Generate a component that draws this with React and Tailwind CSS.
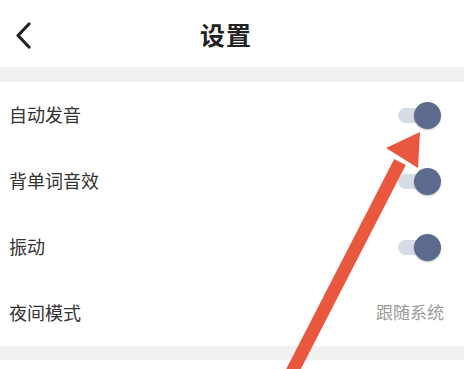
import React from "react"

const rows = [
  { label: "自动发音", toggle: true },
  { label: "背单词音效", toggle: true },
  { label: "振动", toggle: true },
  { label: "夜间模式", value: "跟随系统" },
]

function Toggle() {
  return (
    <div className="flex items-center">
      <div className="w-[30px] h-[15px] rounded-full bg-[#d6dce6]" />
      <div className="w-[27px] h-[27px] -ml-[14px] rounded-full bg-[#5c6b8d] shadow-[0_1px_2px_rgba(0,0,0,0.25)]" />
    </div>
  )
}

export default function App() {
  return (
    <div
      className="relative w-[464px] h-[369px] overflow-hidden bg-white text-[#333]"
      style={{ fontFamily: '"Noto Sans", "Noto Sans CJK SC", sans-serif' }}
    >
      {/* header */}
      <div className="relative h-[67px] flex items-center justify-center">
        <div className="absolute left-[14px] top-[22px]">
          <svg width="20" height="27" viewBox="0 0 20 27" fill="none">
            <path d="M15 2 L4 13.5 L15 25" stroke="#222" strokeWidth="3.2" strokeLinecap="round" strokeLinejoin="round" />
          </svg>
        </div>
        <span className="text-[25px] font-bold text-[#222] tracking-[1px] mt-[4px] mr-[12px]">设置</span>
      </div>

      <div className="h-[15px] bg-[#f1f1f1]" />

      {rows.map((r) => (
        <div key={r.label} className="h-[66px] flex items-center justify-between pl-[9px] pr-[20px]">
          <span className="text-[18px] text-[#333]">{r.label}</span>
          {r.toggle ? (
            <div className="mr-[3px]">
              <Toggle />
            </div>
          ) : (
            <span className="text-[17px] text-[#9a9a9a]">{r.value}</span>
          )}
        </div>
      ))}

      <div className="h-[14px] bg-[#f1f1f1]" />

      {/* red annotation arrow */}
      <svg className="absolute left-0 top-0" width="464" height="369" viewBox="0 0 464 369">
        <line x1="292" y1="372" x2="400" y2="162" stroke="#e9573f" strokeWidth="13" />
        <polygon points="420,132 386,148 418,168" fill="#e9573f" />
      </svg>
    </div>
  )
}
